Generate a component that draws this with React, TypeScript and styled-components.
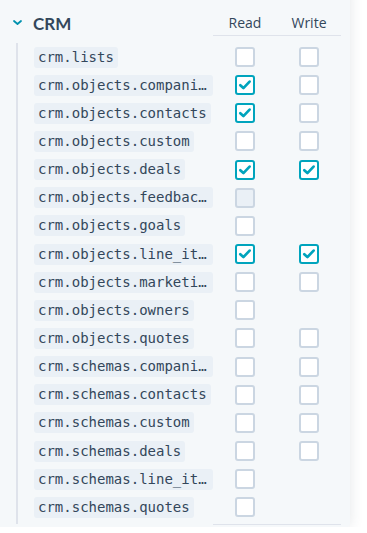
import React from "react";
import styled, { createGlobalStyle } from "styled-components";

const Global = createGlobalStyle`
  html, body { margin: 0; padding: 0; background: #ffffff; overflow: hidden; }
  body { font-family: "Open Sans", "Liberation Sans", sans-serif; color: #33475b; }
`;

const Card = styled.div`
  width: 362px;
  height: 539px;
  margin: -12px 0 0 -12px;
  padding: 12px 0 0 12px;
  box-sizing: border-box;
  background: #f5f8fa;
  box-shadow: 0 0 14px rgba(45, 62, 80, 0.13);
  border-radius: 4px;
`;

const HeaderRow = styled.div`
  display: grid;
  grid-template-columns: 213px 64px 64px;
  height: 36px;
`;

const Title = styled.div`
  display: flex;
  align-items: center;
  gap: 11px;
  padding: 11px 0 0 13px;
  box-sizing: border-box;
  font-family: "Lato", "Liberation Sans", sans-serif;
  font-size: 17px;
  font-weight: 700;
  line-height: 24px;
  color: #33475b;
  svg { margin-top: -3px; }
`;

const ColHead = styled.div`
  border-bottom: 1px solid #dfe3eb;
  text-align: center;
  font-size: 14px;
  line-height: 20px;
  padding-top: 13px;
  box-sizing: border-box;
  color: #33475b;
`;

const Body = styled.div`
  margin: 7px 0 0 16px;
  border-left: 2px solid #dfe3eb;
  padding: 0 0 3px 16px;
  width: 307px;
`;

const Row = styled.div`
  display: grid;
  grid-template-columns: 179px 64px 64px;
  height: 28.15px;
  align-items: center;
`;

const Scope = styled.code`
  justify-self: start;
  max-width: 179px;
  box-sizing: border-box;
  padding: 0 4px;
  height: 21px;
  line-height: 21px;
  background: #eaf0f6;
  border-radius: 3px;
  font-family: "DejaVu Sans Mono", "Liberation Mono", monospace;
  font-size: 14px;
  color: #33475b;
  white-space: nowrap;
  overflow: hidden;
  text-overflow: ellipsis;
`;

const Cell = styled.div`
  display: flex;
  justify-content: center;
  align-items: center;
`;

const Box = styled.span<{ $checked?: boolean; $disabled?: boolean }>`
  width: 20px;
  height: 20px;
  box-sizing: border-box;
  border-radius: 3px;
  border: 2px solid ${(p) => (p.$checked ? "#00a4bd" : "#cbd6e2")};
  background: ${(p) => (p.$disabled ? "#eaf0f6" : "#ffffff")};
  display: flex;
  align-items: center;
  justify-content: center;
`;

const BottomRule = styled.div`
  margin-left: 213px;
  width: 128px;
  height: 1px;
  background: #dfe3eb;
`;

type State = "off" | "on" | "disabled" | null;

const rows: [string, State, State][] = [
  ["crm.lists", "off", "off"],
  ["crm.objects.companies", "on", "off"],
  ["crm.objects.contacts", "on", "off"],
  ["crm.objects.custom", "off", "off"],
  ["crm.objects.deals", "on", "on"],
  ["crm.objects.feedback_submissions", "disabled", null],
  ["crm.objects.goals", "off", null],
  ["crm.objects.line_items", "on", "on"],
  ["crm.objects.marketing_events", "off", "off"],
  ["crm.objects.owners", "off", null],
  ["crm.objects.quotes", "off", "off"],
  ["crm.schemas.companies", "off", "off"],
  ["crm.schemas.contacts", "off", "off"],
  ["crm.schemas.custom", "off", "off"],
  ["crm.schemas.deals", "off", "off"],
  ["crm.schemas.line_items", "off", null],
  ["crm.schemas.quotes", "off", null],
];

const Check = ({ state }: { state: State }) => {
  if (!state) return <Cell />;
  return (
    <Cell>
      <Box $checked={state === "on"} $disabled={state === "disabled"}>
        {state === "on" && (
          <svg width="14" height="14" viewBox="0 0 14 14">
            <path
              d="M2.3 7.2 L5.4 10.1 L11.6 3.6"
              fill="none"
              stroke="#00a4bd"
              strokeWidth="2.7"
              strokeLinecap="round"
              strokeLinejoin="round"
            />
          </svg>
        )}
      </Box>
    </Cell>
  );
};

export default function App() {
  return (
    <>
      <Global />
      <Card>
        <HeaderRow>
          <Title>
            <svg width="9" height="5" viewBox="0 0 9 5">
              <path
                d="M1 1 L4.5 4 L8 1"
                fill="none"
                stroke="#0091ae"
                strokeWidth="1.8"
                strokeLinecap="round"
                strokeLinejoin="round"
              />
            </svg>
            <span>CRM</span>
          </Title>
          <ColHead>Read</ColHead>
          <ColHead>Write</ColHead>
        </HeaderRow>
        <Body>
          {rows.map(([name, r, w]) => (
            <Row key={name}>
              <Scope>{name}</Scope>
              <Check state={r} />
              <Check state={w} />
            </Row>
          ))}
        </Body>
        <BottomRule />
      </Card>
    </>
  );
}
